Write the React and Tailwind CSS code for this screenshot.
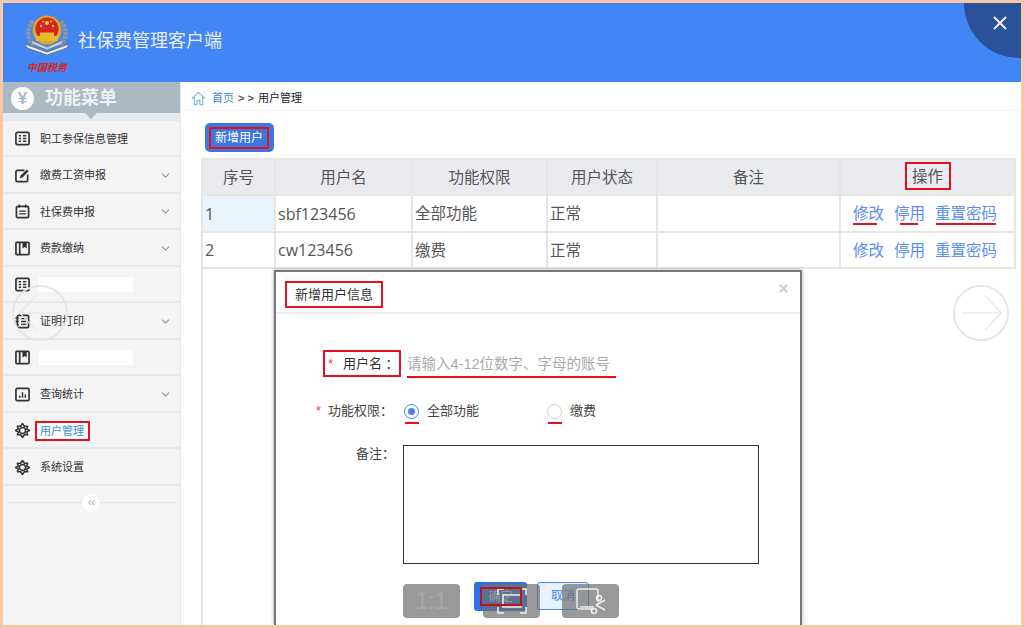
import { ChevronDown, ChevronsLeft, X } from 'lucide-react'

const FONT = '[font-family:"Liberation_Sans","Noto_Sans_CJK_SC",sans-serif]'
const LATIN = '[font-family:"Open_Sans","Noto_Sans_CJK_SC",sans-serif]'

function IconFrame({ children }) {
  return (
    <svg viewBox="0 0 16 16" className="h-[15px] w-[15px] shrink-0" fill="none" stroke="#333" strokeWidth="1.8">
      {children}
    </svg>
  )
}

function GridIcon() {
  return (
    <IconFrame>
      <rect x="1" y="1.500" width="14" height="13" rx="1.500" />
      <path d="M4 5h2.500M4 8h2.500M4 11h2.500M8.500 5H12M8.500 8H12M8.500 11H12" strokeWidth="1.500" />
    </IconFrame>
  )
}

function EditIcon() {
  return (
    <IconFrame>
      <path d="M10 2.500H2.500A1.500 1.500 0 0 0 1 4V13a1.500 1.500 0 0 0 1.500 1.500H12A1.500 1.500 0 0 0 13.500 13V7" />
      <path d="M5 11l1-3 6.500-6.500 2 2L8 10z" fill="#333" stroke="none" />
    </IconFrame>
  )
}

function CalendarIcon() {
  return (
    <IconFrame>
      <rect x="1.500" y="2.500" width="13" height="12" rx="1.500" />
      <path d="M4.500 0.500v3.500M11.500 0.500v3.500M4.500 7.500h7M4.500 10.500h7" strokeWidth="1.400" />
    </IconFrame>
  )
}

function BookIcon() {
  return (
    <IconFrame>
      <rect x="1" y="1.500" width="14" height="13" rx="1" />
      <path d="M5 1.500v13" />
      <path d="M8 1.500h4.500v6.500l-2.200-1.500L8 8z" fill="#333" stroke="none" />
    </IconFrame>
  )
}

function NotebookIcon() {
  return (
    <IconFrame>
      <rect x="2.500" y="1.500" width="12" height="13" rx="1.500" />
      <path d="M0.500 4.500h3.500M0.500 8h3.500M0.500 11.500h3.500M6.500 5h5.500M6.500 8h5.500M6.500 11h5.500" strokeWidth="1.400" />
    </IconFrame>
  )
}

function ChartIcon() {
  return (
    <IconFrame>
      <rect x="1" y="1.500" width="14" height="13" rx="1.500" />
      <path d="M5 11.500V9M8 11.500V5.500M11 11.500V8" strokeWidth="1.600" />
    </IconFrame>
  )
}

function GearIcon() {
  return (
    <svg viewBox="0 0 16 16" className="h-[15px] w-[15px] shrink-0" fill="none" stroke="#333">
      <path d="M8 0.500L10 3.500H13.500L12.500 6.500L15.500 8L12.500 9.500L13.500 12.500H10L8 15.500L6 12.500H2.500L3.500 9.500L0.500 8L3.500 6.500L2.500 3.500H6z" strokeWidth="1.600" strokeLinejoin="round" />
      <circle cx="8" cy="8" r="3.300" strokeWidth="1.600" />
    </svg>
  )
}

const menu = [
  { icon: <GridIcon />, label: '职工参保信息管理' },
  { icon: <EditIcon />, label: '缴费工资申报', arrow: true },
  { icon: <CalendarIcon />, label: '社保费申报', arrow: true },
  { icon: <BookIcon />, label: '费款缴纳', arrow: true },
  { icon: <GridIcon />, hidden: true },
  { icon: <NotebookIcon />, label: '证明打印', arrow: true },
  { icon: <BookIcon />, hidden: true },
  { icon: <ChartIcon />, label: '查询统计', arrow: true },
  { icon: <GearIcon />, label: '用户管理', active: true },
  { icon: <GearIcon />, label: '系统设置' },
]

function Emblem() {
  return (
    <svg viewBox="0 0 44 40" className="h-[40px] w-[44px]">
      <path d="M8 6C1 14 2 25 10 31M36 6c7 8 6 19-2 25" fill="none" stroke="#8a979d" strokeWidth="4.500" strokeDasharray="3 1" />
      <path d="M0 29l22 8 22-8-2 4-20 7-20-7z" fill="#e6ebee" stroke="#5d6a70" strokeWidth="0.800" />
      <path d="M6 25l16 7 16-7-1 4-15 6-15-6z" fill="#c8d0d4" stroke="#5d6a70" strokeWidth="0.600" />
      <circle cx="22" cy="15" r="14.500" fill="#d9a928" />
      <circle cx="22" cy="14" r="11.500" fill="#d8261c" />
      <path d="M11 21h22v5H11zM15 17.500h14V21H15z" fill="#e9b82f" />
      <circle cx="22" cy="8" r="2" fill="#f7d64a" />
      <circle cx="16" cy="11" r="1.200" fill="#f7d64a" />
      <circle cx="28" cy="11" r="1.200" fill="#f7d64a" />
      <circle cx="18" cy="6.500" r="0.900" fill="#f7d64a" />
      <circle cx="26" cy="6.500" r="0.900" fill="#f7d64a" />
    </svg>
  )
}

function Sidebar() {
  return (
    <aside className="flex w-[178px] shrink-0 flex-col border-r border-[#e6e6e6] bg-[#f4f4f4]">
      <div className="relative flex h-[31px] shrink-0 items-center gap-[11px] bg-[#aabac3] pl-2 pt-[2px]">
        <span className="flex h-[23px] w-[23px] items-center justify-center rounded-full bg-white text-[17px] font-bold text-[#aabac3]">¥</span>
        <span className="text-[18px] font-bold text-[#eef1f4]">功能菜单</span>
        <span className="absolute left-[82px] top-[31px] h-0 w-0 border-x-[6px] border-t-[6px] border-x-transparent border-t-[#aabac3]" />
      </div>
      <div className="h-[7.500px] shrink-0 bg-[#e5eaf1]" />
      {menu.map((item, i) => (
        <div key={i} className="flex h-[36.500px] shrink-0 items-center border-b-2 border-[#e8e8e8] pl-3 pr-[8px] pt-[2px] text-[11px] text-[#333]">
          {item.icon}
          {item.hidden ? (
            <span className="ml-[9px] h-[15px] w-[94px] bg-white" />
          ) : item.active ? (
            <span className="ml-[5px] flex h-[20px] w-[55px] items-center border-2 border-[#e8101c] bg-white pl-[3px] text-[#3c8dcb]">{item.label}</span>
          ) : (
            <span className="ml-[10px]">{item.label}</span>
          )}
          {item.arrow && <ChevronDown className="ml-auto h-[13px] w-[13px] text-[#999]" />}
        </div>
      ))}
      <div className="relative mx-[5px] mt-[16px] h-px shrink-0 bg-[#e2e2e2]">
        <span className="absolute left-[74px] top-[-8px] flex h-[18px] w-[18px] items-center justify-center rounded-full bg-white">
          <ChevronsLeft className="h-[11px] w-[11px] text-[#8794b8]" />
        </span>
      </div>
    </aside>
  )
}

function ActionLink({ label, mark, lineClass }) {
  return (
    <span className="relative">
      {label}
      {mark && <span className={`absolute top-[21px] h-[2px] bg-[#e8101c] ${lineClass}`} />}
    </span>
  )
}

function UserTable() {
  const rows = [
    ['1', 'sbf123456', '全部功能', '正常', true],
    ['2', 'cw123456', '缴费', '正常', false],
  ]
  const cell = 'border-2 border-[#e6e7e1] px-[2px] pt-px text-left font-normal'
  return (
    <table className="w-[813px] table-fixed border-collapse text-[15.500px] text-[#555]">
      <colgroup>
        <col className="w-[73px]" />
        <col className="w-[137px]" />
        <col className="w-[135px]" />
        <col className="w-[110px]" />
        <col className="w-[183px]" />
        <col className="w-[175px]" />
      </colgroup>
      <thead>
        <tr className="h-[36px] bg-[#e9ebef]">
          {['序号', '用户名', '功能权限', '用户状态', '备注'].map((title) => (
            <th key={title} className={`${cell} text-center!`}>{title}</th>
          ))}
          <th className={`${cell} text-center!`}>
            <span className="mb-[3px] inline-block h-[28px] w-[46px] border-2 border-[#e8101c] leading-[26px]">操作</span>
          </th>
        </tr>
      </thead>
      <tbody>
        {rows.map(([no, name, right, state, first]) => (
          <tr key={no} className="h-[36.500px]">
            <td className={`${cell} ${LATIN} text-[16px] ${first ? 'bg-[#e8f3fd]' : ''}`}>{no}</td>
            <td className={`${cell} ${LATIN} text-[16px]`}>{name}</td>
            <td className={cell}>{right}</td>
            <td className={cell}>{state}</td>
            <td className={cell} />
            <td className={cell}>
              <div className="flex gap-[10px] pl-[10px] text-[#5b8def]">
                <ActionLink label="修改" mark={first} lineClass="left-0 w-[24px]" />
                <ActionLink label="停用" mark={first} lineClass="left-[6px] w-[18px]" />
                <ActionLink label="重置密码" mark={first} lineClass="left-px w-[60px]" />
              </div>
            </td>
          </tr>
        ))}
      </tbody>
    </table>
  )
}

function Radio({ checked, label, className }) {
  return (
    <div className={`flex items-center ${className}`}>
      <span className={`relative flex h-[15px] w-[15px] items-center justify-center rounded-full border bg-white ${checked ? 'border-[#4285f4]' : 'border-[#ccc]'}`}>
        {checked && <span className="h-[7px] w-[7px] rounded-full bg-[#4285f4]" />}
        <span className="absolute left-0 top-[17px] h-[2px] w-[14px] bg-[#e8101c]" />
      </span>
      <span className="ml-[8px] text-[13px] text-[#444]">{label}</span>
    </div>
  )
}

function Modal() {
  return (
    <div className="absolute left-[271px] top-[267px] flex h-[355px] w-[528px] flex-col border-x-2 border-t-2 border-[#777] bg-white shadow-[0_0_4px_rgba(0,0,0,0.35)]">
      <div className="relative flex h-[42px] shrink-0 items-center border-b-2 border-[#eeeef2] pl-[9px] pt-[5px]">
        <span className="border-2 border-[#e8101c] px-[8px] py-[2px] text-[13px] text-[#333]">新增用户信息</span>
        <X className="absolute right-[10px] top-[10px] h-[13px] w-[13px] text-[#ccc]" strokeWidth={3.500} />
      </div>
      <div className="flex flex-col pl-[47px] pt-[35px]">
        <div className="flex h-[29px] items-center">
          <span className="flex h-[27px] w-[78px] items-center border-2 border-[#e8101c] pl-[3px] text-[13px] text-[#333]">
            <span className="w-[15px] text-[#f04848]">*</span>用户名 ：
          </span>
          <span className="ml-[6px] w-[209px] border-b-2 border-[#e8101c] pt-[3px] text-[14.500px] leading-[24px] text-[#aaa]">请输入4-12位数字、字母的账号</span>
        </div>
        <div className="mt-[21px] flex h-[24px] items-center">
          <span className="-ml-[7px] w-[12px] text-[13px] text-[#f04848]">*</span>
          <span className="w-[76px] text-[13px] text-[#444]">功能权限：</span>
          <Radio checked label="全部功能" className="w-[143px]" />
          <Radio label="缴费" />
        </div>
        <div className="mt-[22px] flex">
          <span className="ml-[33px] w-[47px] text-[13px] leading-[18px] text-[#444]">备注：</span>
          <div className="h-[119px] w-[356px] border border-[#333]" />
        </div>
        <div className="mt-[18px] flex pl-[151px]">
          <span className="flex h-[29px] w-[53px] items-center justify-center rounded-[3px] bg-[#2f72e4] text-[12px] text-white">确定</span>
          <span className="ml-[10px] flex h-[28px] w-[52px] items-center justify-center rounded-[3px] border border-[#4285f4] bg-[#e8f2ff] text-[12px] text-[#4285f4]">取消</span>
        </div>
      </div>
    </div>
  )
}

function ViewerArrow({ className }) {
  return (
    <svg viewBox="0 0 60 60" className={`absolute h-[58px] w-[58px] ${className}`} fill="none" stroke="#e4e4e4" strokeWidth="1.200">
      <circle cx="30" cy="30" r="28" strokeWidth="1.800" />
      <path d="M50 30H9M26 12L9 30l17 18" />
    </svg>
  )
}

function ViewerTools() {
  const box = 'absolute top-[581px] flex h-[34px] w-[57px] items-center justify-center rounded-[4px] bg-[#6e6e6e]/70'
  return (
    <>
      <div className={`${box} left-[400px] text-[23px] text-[#a9a9a9]`}>1:1</div>
      <div className={`${box} left-[480px]`}>
        <svg viewBox="0 0 30 26" className="h-[26px] w-[30px]" fill="none" stroke="#eee" strokeWidth="1.500">
          <path d="M1 7V1h6M23 1h6v6M1 19v6h6M23 25h6v-6" />
          <rect x="6" y="7" width="18" height="12" />
        </svg>
      </div>
      <div className={`${box} left-[559px]`}>
        <svg viewBox="0 0 34 28" className="h-[28px] w-[34px]" fill="none" stroke="#eee" strokeWidth="1.500">
          <path d="M20 22H5a2 2 0 0 1-2-2V4a2 2 0 0 1 2-2h17a2 2 0 0 1 2 2v11" />
          <path d="M6 20h14M22 18l9-5M22 18l9 5" />
          <circle cx="20" cy="24" r="2.500" />
          <circle cx="25" cy="11" r="2.500" />
        </svg>
      </div>
      <div className="absolute left-[477px] top-[584px] h-[19px] w-[42px] border-2 border-[#c2101c]" />
    </>
  )
}

export default function App() {
  return (
    <div className={`relative flex h-[628px] w-[1024px] flex-col overflow-hidden border-[3px] border-[#f6c8a8] bg-white ${FONT}`}>
      <header className="relative flex h-[79px] shrink-0 bg-[#4285f4] pl-[22px] pt-[12px]">
        <div className="flex flex-col items-center">
          <Emblem />
          <span className="mt-[6px] whitespace-nowrap text-[10px] font-bold italic leading-[14px] text-[#d8261c]">中国税务</span>
        </div>
        <h1 className="ml-[9px] mt-[13px] text-[18px] font-normal text-[#e8f0fe]">社保费管理客户端</h1>
        <div className="absolute right-0 top-0 h-[55px] w-[57px] rounded-bl-full bg-[#2a5298]">
          <X className="absolute right-[10px] top-[9px] h-[22px] w-[22px] text-[#eef2f8]" />
        </div>
      </header>
      <div className="flex min-h-0 flex-1">
        <Sidebar />
        <main className="flex min-w-0 flex-1 flex-col">
          <div className="flex h-[29px] shrink-0 items-center border-b border-[#f4f4f4] pl-[10px] pt-[5px] text-[11px]">
            <svg viewBox="0 0 16 16" className="h-[15px] w-[15px]" fill="none" stroke="#7fb8dd" strokeWidth="1.200">
              <path d="M1 8l7-6.500L15 8M3.500 6.500V14.500h3V10h3v4.500h3V6.500" />
            </svg>
            <span className="ml-[6px] text-[#3c8dcb]">首页</span>
            <span className="ml-[4px] font-bold text-[#555]">&gt; &gt;</span>
            <span className="ml-[4px] text-[#222]">用户管理</span>
          </div>
          <div className="flex min-h-0 flex-1 flex-col pl-[20px]">
            <div className="flex h-[47px] shrink-0 items-center pl-[4px] pt-[6px]">
              <button type="button" className="flex h-[29px] w-[69px] items-center rounded-[5px] bg-[#3b78e0] pl-[4px] text-[12px] text-white">
                <span className="flex h-[22px] w-[60px] items-center justify-center border-2 border-[#e8101c]">新增用户</span>
              </button>
            </div>
            <div className="flex-1 border-l-2 border-[#e6e7e1]">
              <div className="-ml-[2px]">
                <UserTable />
              </div>
            </div>
          </div>
        </main>
      </div>
      <ViewerArrow className="left-[8px] top-[281px] rotate-0" />
      <ViewerArrow className="left-[949px] top-[281px] rotate-180" />
      <Modal />
      <ViewerTools />
    </div>
  )
}
